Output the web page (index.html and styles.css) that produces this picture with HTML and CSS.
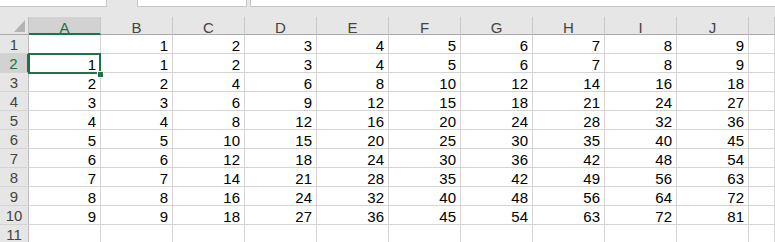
FILE: index.html
```html
<!DOCTYPE html>
<html>
<head>
<meta charset="utf-8">
<link rel="stylesheet" href="styles.css">
</head>
<body>
<div class="topbar">
  <div class="box box-name"></div>
  <div class="box box-mid"></div>
  <div class="box box-formula"></div>
</div>
<div class="sheet">
  <div class="corner"><svg width="11" height="12" viewBox="0 0 11 12"><polygon points="11,0 11,12 0,12" fill="#b4b4b4"/></svg></div>
  <div class="ch sel">A</div><div class="ch">B</div><div class="ch">C</div><div class="ch">D</div><div class="ch">E</div><div class="ch">F</div><div class="ch">G</div><div class="ch">H</div><div class="ch">I</div><div class="ch">J</div><div class="ch"></div>

  <div class="rh">1</div><div class="c"></div><div class="c">1</div><div class="c">2</div><div class="c">3</div><div class="c">4</div><div class="c">5</div><div class="c">6</div><div class="c">7</div><div class="c">8</div><div class="c">9</div><div class="c"></div>
  <div class="rh sel">2</div><div class="c">1</div><div class="c">1</div><div class="c">2</div><div class="c">3</div><div class="c">4</div><div class="c">5</div><div class="c">6</div><div class="c">7</div><div class="c">8</div><div class="c">9</div><div class="c"></div>
  <div class="rh">3</div><div class="c">2</div><div class="c">2</div><div class="c">4</div><div class="c">6</div><div class="c">8</div><div class="c">10</div><div class="c">12</div><div class="c">14</div><div class="c">16</div><div class="c">18</div><div class="c"></div>
  <div class="rh">4</div><div class="c">3</div><div class="c">3</div><div class="c">6</div><div class="c">9</div><div class="c">12</div><div class="c">15</div><div class="c">18</div><div class="c">21</div><div class="c">24</div><div class="c">27</div><div class="c"></div>
  <div class="rh">5</div><div class="c">4</div><div class="c">4</div><div class="c">8</div><div class="c">12</div><div class="c">16</div><div class="c">20</div><div class="c">24</div><div class="c">28</div><div class="c">32</div><div class="c">36</div><div class="c"></div>
  <div class="rh">6</div><div class="c">5</div><div class="c">5</div><div class="c">10</div><div class="c">15</div><div class="c">20</div><div class="c">25</div><div class="c">30</div><div class="c">35</div><div class="c">40</div><div class="c">45</div><div class="c"></div>
  <div class="rh">7</div><div class="c">6</div><div class="c">6</div><div class="c">12</div><div class="c">18</div><div class="c">24</div><div class="c">30</div><div class="c">36</div><div class="c">42</div><div class="c">48</div><div class="c">54</div><div class="c"></div>
  <div class="rh">8</div><div class="c">7</div><div class="c">7</div><div class="c">14</div><div class="c">21</div><div class="c">28</div><div class="c">35</div><div class="c">42</div><div class="c">49</div><div class="c">56</div><div class="c">63</div><div class="c"></div>
  <div class="rh">9</div><div class="c">8</div><div class="c">8</div><div class="c">16</div><div class="c">24</div><div class="c">32</div><div class="c">40</div><div class="c">48</div><div class="c">56</div><div class="c">64</div><div class="c">72</div><div class="c"></div>
  <div class="rh">10</div><div class="c">9</div><div class="c">9</div><div class="c">18</div><div class="c">27</div><div class="c">36</div><div class="c">45</div><div class="c">54</div><div class="c">63</div><div class="c">72</div><div class="c">81</div><div class="c"></div>
  <div class="rh">11</div><div class="c"></div><div class="c"></div><div class="c"></div><div class="c"></div><div class="c"></div><div class="c"></div><div class="c"></div><div class="c"></div><div class="c"></div><div class="c"></div><div class="c"></div>

  <div class="selection"></div>
  <div class="fill-handle"></div>
</div>
</body>
</html>
```

FILE: styles.css
```css
* { box-sizing: border-box; }
html, body {
  margin: 0;
  padding: 0;
  width: 775px;
  height: 242px;
  overflow: hidden;
  background: #e6e6e6;
}
body {
  font-family: "Liberation Sans", Arial, sans-serif;
  color: #000;
}
.topbar {
  display: flex;
  height: 7px;
}
.box {
  background: #fff;
  border-bottom: 1px solid #c6c6c6;
}
.box-name {
  width: 107px;
  border-right: 1px solid #c6c6c6;
}
.box-mid {
  width: 110px;
  margin-left: 30px;
  border-left: 1px solid #c6c6c6;
  border-right: 1px solid #c6c6c6;
}
.box-formula {
  flex: 1;
  margin-left: 3px;
  border-left: 1px solid #c6c6c6;
}
.sheet {
  position: relative;
  margin-top: 10px;
  display: grid;
  grid-template-columns: 29px repeat(10, 72px) 1fr;
  grid-template-rows: 18px repeat(11, 19px);
}
.corner {
  background: #e6e6e6;
  border-right: 1px solid #bdbdbd;
  border-bottom: 1px solid #ababab;
  display: flex;
  justify-content: flex-end;
  align-items: flex-end;
  padding: 0 3px 2px 0;
}
.corner svg { display: block; }
.ch {
  background: #e6e6e6;
  border-right: 1px solid #c8c8c8;
  border-bottom: 1px solid #ababab;
  font-size: 15px;
  color: #444;
  text-align: center;
  line-height: 14px;
  padding-top: 4px;
}
.ch.sel {
  background: #d2d2d2;
  color: #217346;
  border-bottom: 2px solid #217346;
}
.rh {
  background: #e6e6e6;
  border-right: 1px solid #bdbdbd;
  border-bottom: 1px solid #d4d4d4;
  font-size: 15px;
  color: #444;
  text-align: center;
  line-height: 14px;
  padding-top: 3px;
  overflow: hidden;
}
.rh.sel {
  background: #d2d2d2;
  color: #217346;
  border-right: 2px solid #217346;
}
.c {
  background: #fff;
  border-right: 1px solid #d4d4d4;
  border-bottom: 1px solid #d4d4d4;
  font-size: 15px;
  line-height: 14px;
  padding: 4px 4px 0 0;
  text-align: right;
}
.selection {
  position: absolute;
  left: 28px;
  top: 36px;
  width: 73px;
  height: 21px;
  border: 2px solid #217346;
}
.fill-handle {
  position: absolute;
  left: 97px;
  top: 54px;
  width: 7px;
  height: 7px;
  background: #217346;
  border: 1px solid #fff;
}
```
